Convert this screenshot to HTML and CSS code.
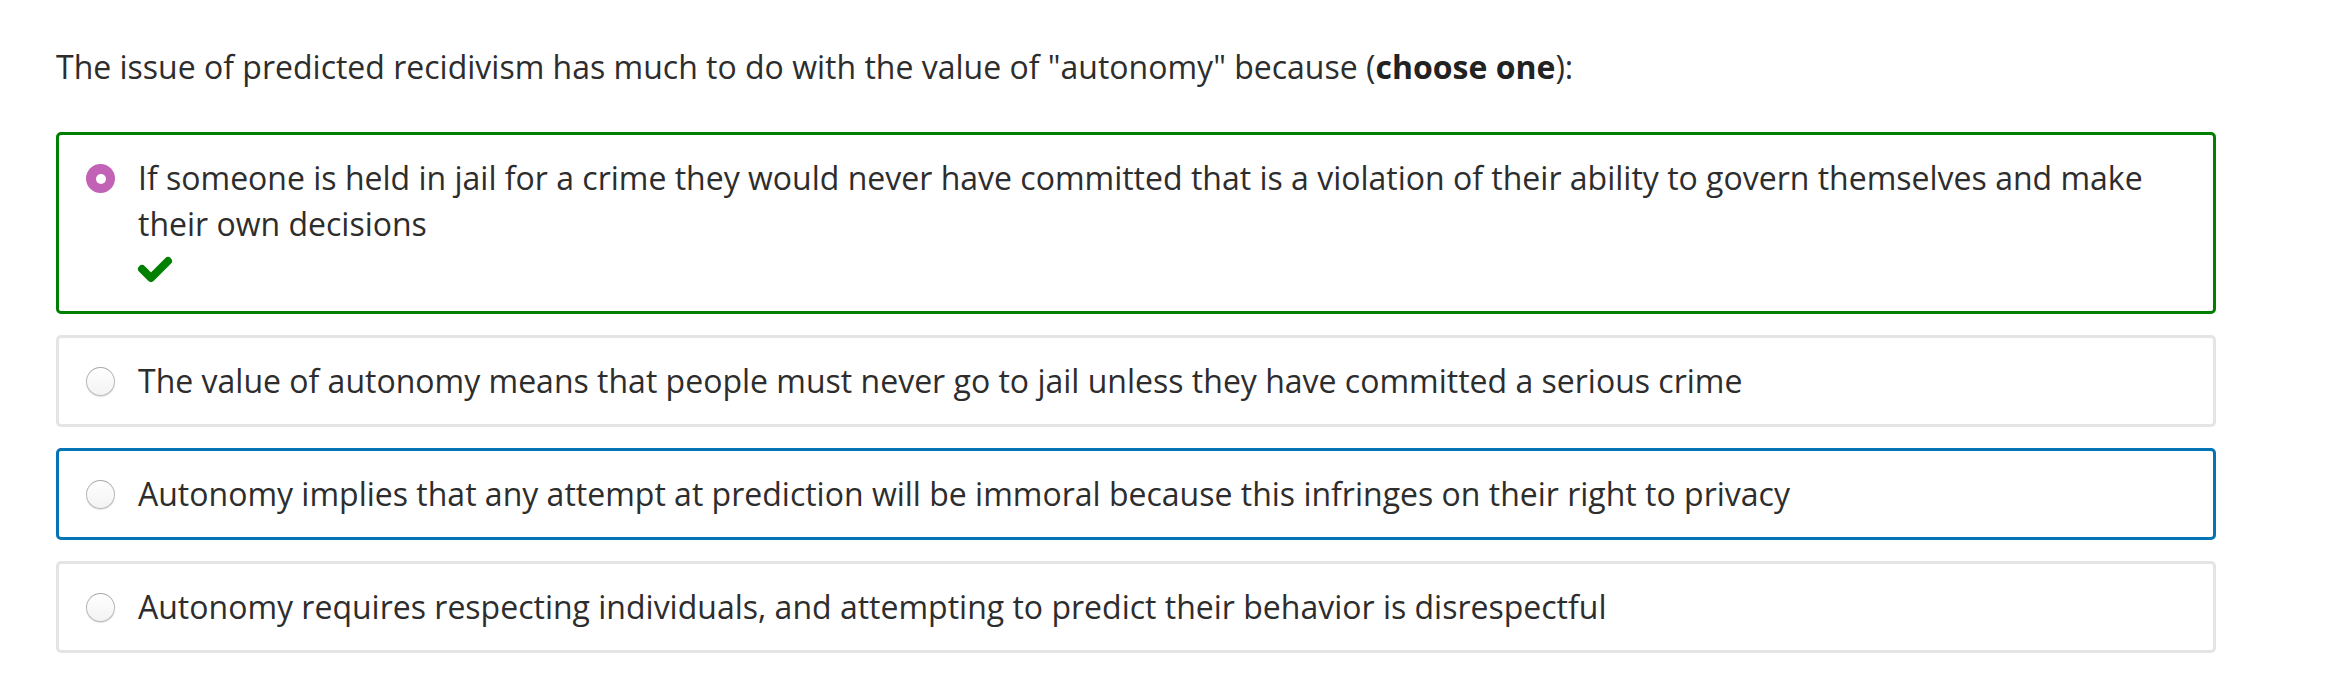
FILE: index.html
```html
<!DOCTYPE html>
<html lang="en">
<head>
<meta charset="utf-8">
<title>Quiz question</title>
<link rel="stylesheet" href="styles.css">
</head>
<body>
<main class="quiz">
  <p class="question">The issue of predicted recidivism has much to do with the value of "autonomy" because (<strong>choose one</strong>):</p>
  <div class="answers">
    <div class="answer answer--correct">
      <span class="radio radio--checked"></span>
      <div class="answer-body">
        <span class="answer-text">If someone is held in jail for a crime they would never have committed that is a violation of their ability to govern themselves and make their own decisions</span>
        <span class="answer-mark">
          <svg class="check" viewBox="0 0 36 30" width="36" height="30" aria-hidden="true"><polyline points="5,15 14,24 31,7" fill="none" stroke="#008000" stroke-width="8" stroke-linecap="round" stroke-linejoin="round"/></svg>
        </span>
      </div>
    </div>
    <div class="answer">
      <span class="radio"></span>
      <div class="answer-body"><span class="answer-text">The value of autonomy means that people must never go to jail unless they have committed a serious crime</span></div>
    </div>
    <div class="answer answer--focus">
      <span class="radio"></span>
      <div class="answer-body"><span class="answer-text">Autonomy implies that any attempt at prediction will be immoral because this infringes on their right to privacy</span></div>
    </div>
    <div class="answer">
      <span class="radio"></span>
      <div class="answer-body"><span class="answer-text">Autonomy requires respecting individuals, and attempting to predict their behavior is disrespectful</span></div>
    </div>
  </div>
</main>
</body>
</html>
```
FILE: styles.css
```css
html, body {
  margin: 0;
  padding: 0;
  background: #ffffff;
}

body {
  font-family: "Open Sans", "DejaVu Sans", sans-serif;
  font-size: 32px;
  color: #2d2d2d;
}

.quiz {
  width: 2160px;
  padding: 44px 0 0 56px;
}

.question {
  margin: 0 0 42px 0;
  line-height: 46px;
}

.question strong {
  font-weight: 700;
  color: #222;
}

.answers {
  display: flex;
  flex-direction: column;
  gap: 21px;
}

.answer {
  display: flex;
  align-items: flex-start;
  gap: 23px;
  border: 3px solid #e4e4e4;
  border-radius: 5px;
  padding: 20px 60px 20px 27px;
  line-height: 46px;
}

.answer--correct {
  border-color: #008000;
}

.answer--focus {
  border-color: #0374b5;
}

.radio {
  flex: none;
  box-sizing: border-box;
  width: 29px;
  height: 29px;
  margin-top: 9px;
  border-radius: 50%;
  border: 1px solid #b9b9b9;
  border-top-color: #a9a9a9;
  background: linear-gradient(#ffffff, #f3f3f3);
  box-shadow: 0 1px 1px rgba(0, 0, 0, 0.12);
  display: flex;
  align-items: center;
  justify-content: center;
}

.radio--checked {
  border: none;
  background: #c262b6;
  box-shadow: none;
}

.radio--checked::after {
  content: "";
  width: 10px;
  height: 10px;
  border-radius: 50%;
  background: #ffffff;
}

.answer-body {
  display: flex;
  flex-direction: column;
}

.answer-mark {
  display: flex;
  align-items: center;
  height: 44px;
}

.check {
  display: block;
  margin-left: -1px;
}
```
